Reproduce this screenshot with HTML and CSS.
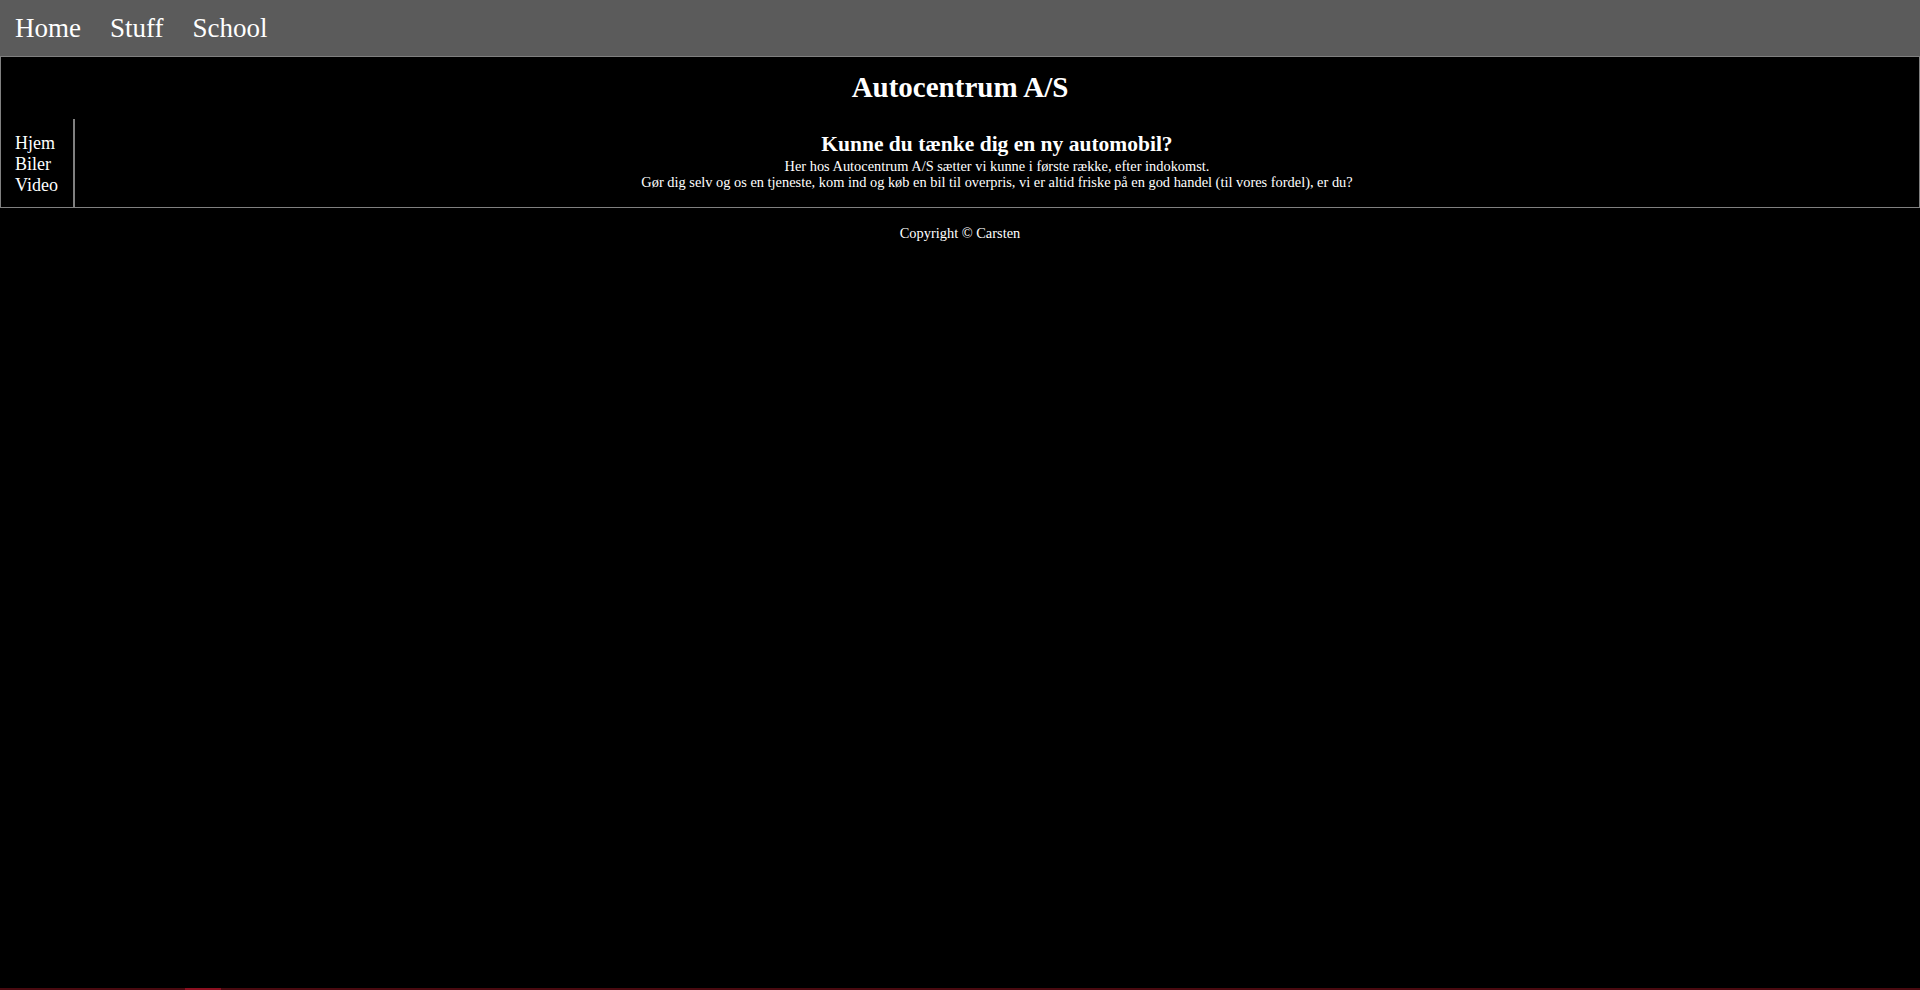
FILE: index.html
```html
<!DOCTYPE html>
<html lang="da">
<head>
<meta charset="utf-8">
<title>Autocentrum A/S</title>
<link rel="stylesheet" href="styles.css">
</head>
<body>
<nav class="topnav">
  <a class="topnav-link" href="#">Home</a>
  <a class="topnav-link" href="#">Stuff</a>
  <a class="topnav-link" href="#">School</a>
</nav>
<div class="frame">
  <h1 class="title">Autocentrum A/S</h1>
  <div class="row">
    <ul class="sidebar">
      <li><a class="side-link" href="#">Hjem</a></li>
      <li><a class="side-link" href="#">Biler</a></li>
      <li><a class="side-link" href="#">Video</a></li>
    </ul>
    <main class="content">
      <h2 class="subtitle">Kunne du tænke dig en ny automobil?</h2>
      <p class="text">Her hos Autocentrum A/S sætter vi kunne i første række, efter indokomst.<br>Gør dig selv og os en tjeneste, kom ind og køb en bil til overpris, vi er altid friske på en god handel (til vores fordel), er du?</p>
    </main>
  </div>
</div>
<footer class="footer">Copyright © Carsten</footer>
<div class="bottom-strip"><span class="bottom-strip-mark"></span></div>
</body>
</html>
```
FILE: styles.css
```css
html, body {
  margin: 0;
  padding: 0;
  background: #000;
  color: #fff;
  font-family: "Liberation Serif", "Times New Roman", serif;
}

.topnav {
  display: flex;
  gap: 29px;
  align-items: center;
  height: 56px;
  padding: 0 15px;
  background: #5b5b5b;
  box-sizing: border-box;
}

.topnav-link {
  color: #fff;
  text-decoration: none;
  font-size: 27px;
  line-height: 30px;
}

.frame {
  border: 1px solid #808080;
}

.title {
  margin: 0;
  padding: 14px 0 15px;
  text-align: center;
  font-size: 29px;
  font-weight: bold;
  line-height: 33px;
}

.row {
  display: flex;
}

.sidebar {
  list-style: none;
  margin: 0;
  padding: 14px 14px 11px 14px;
  width: 44px;
  border-right: 2px solid #808080;
  font-size: 18px;
  line-height: 21px;
}

.side-link {
  color: #fff;
  text-decoration: none;
}

.content {
  flex: 1;
  padding: 13px 0;
  text-align: center;
}

.subtitle {
  margin: 0;
  font-size: 21.5px;
  font-weight: bold;
  line-height: 24.7px;
}

.text {
  margin: 0;
  padding-top: 1px;
  font-size: 14.4px;
  line-height: 16px;
}

.footer {
  margin-top: 17px;
  text-align: center;
  font-size: 14.4px;
  line-height: 16.5px;
}

.bottom-strip {
  position: fixed;
  left: 0;
  right: 0;
  bottom: 0;
  height: 2px;
  background: #4a0a10;
}

.bottom-strip-mark {
  position: absolute;
  left: 185px;
  top: 0;
  width: 36px;
  height: 2px;
  background: #8c1020;
}
```
